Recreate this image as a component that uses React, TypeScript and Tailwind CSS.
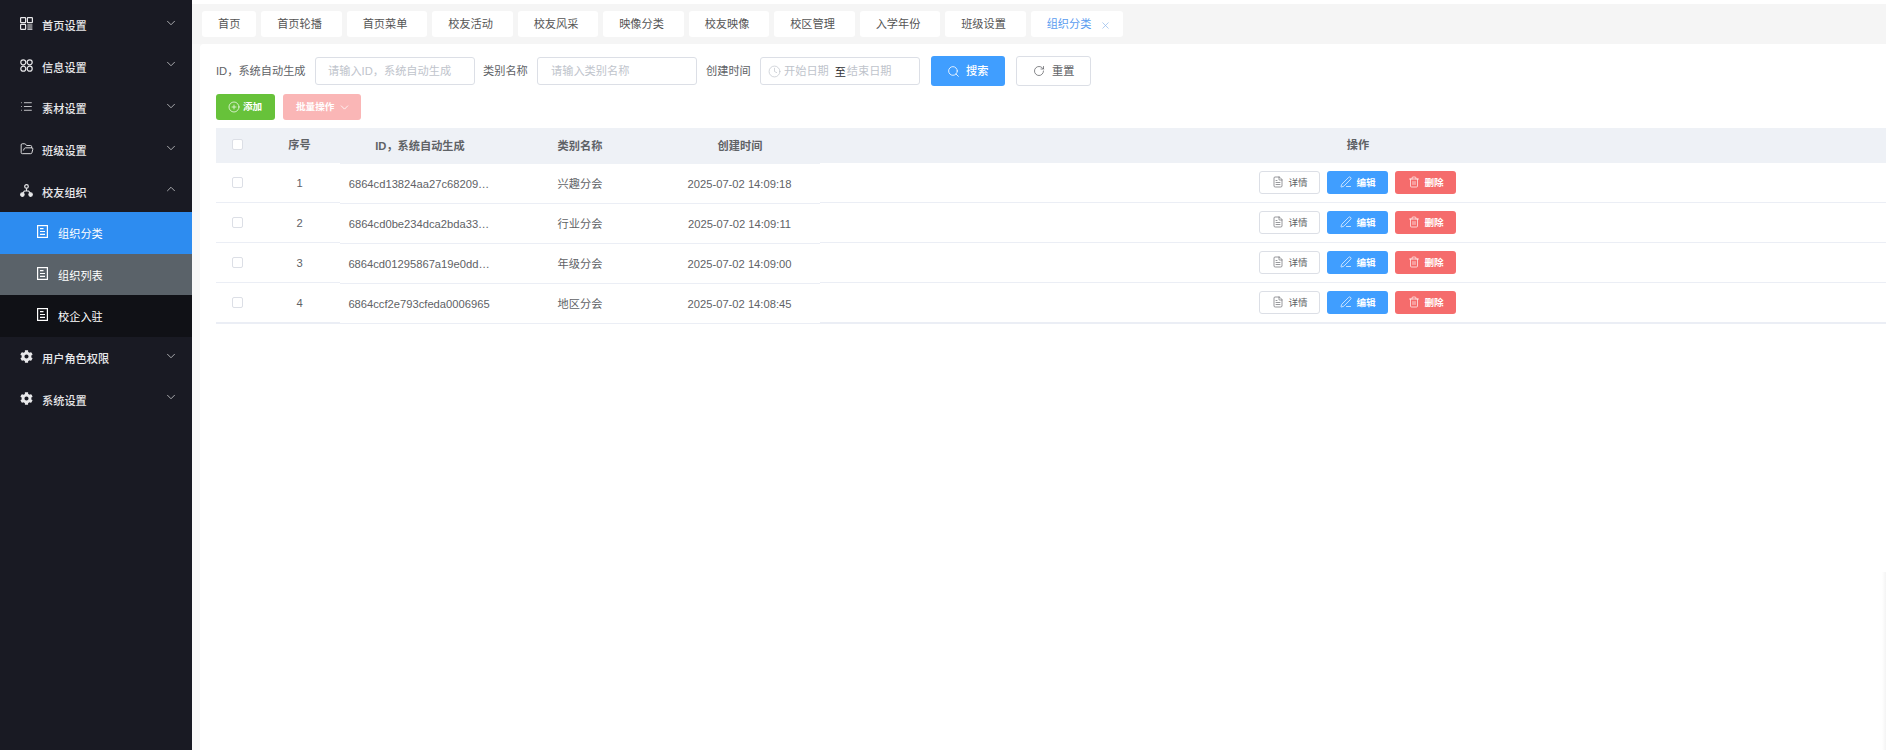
import React from 'react'
import { ChevronDown, ChevronUp, CirclePlus, Clock, FileText, FolderOpen, List, PenLine, RotateCw, Search, Trash2, X } from 'lucide-react'
import { FaCog } from 'react-icons/fa'

function HomeIcon() {
	return (
		<svg width="13" height="13" viewBox="0 0 13 13" fill="none" stroke="currentColor" strokeWidth="1.2">
			<rect x="0.6" y="0.6" width="5" height="5" rx="0.6" />
			<rect x="0.6" y="7.4" width="5" height="5" rx="0.6" />
			<rect x="7.4" y="0.6" width="5" height="5" rx="0.6" />
			<path d="M7.4 8h5M7.4 10h5M7.4 12.2h5" />
		</svg>
	)
}

function InfoIcon() {
	return (
		<svg width="13" height="13" viewBox="0 0 13 13" fill="none" stroke="currentColor" strokeWidth="1.2">
			<circle cx="3.3" cy="3.3" r="2.5" />
			<circle cx="9.7" cy="3.3" r="2.5" />
			<circle cx="3.3" cy="9.7" r="2.5" />
			<circle cx="9.7" cy="9.7" r="2.5" />
		</svg>
	)
}

function OrgIcon() {
	return (
		<svg width="13" height="13" viewBox="0 0 13 13" fill="none" stroke="currentColor" strokeWidth="1.2">
			<circle cx="6.5" cy="2.4" r="1.8" />
			<circle cx="2.4" cy="10.6" r="1.7" fill="currentColor" />
			<circle cx="10.6" cy="10.6" r="1.7" fill="currentColor" />
			<path d="M6.5 4.2v2.8M2.8 9.2l1.6-2.2h4.2l1.6 2.2" />
		</svg>
	)
}

function DocIcon() {
	return (
		<svg width="11" height="13" viewBox="0 0 11 13" fill="none" stroke="currentColor" strokeWidth="1.2">
			<rect x="0.6" y="0.6" width="9.8" height="11.8" />
			<path d="M3 3.6h3.5M3 6.5h5M3 9.4h5" />
		</svg>
	)
}

const topMenus = [
	{ label: '首页设置', icon: <HomeIcon /> },
	{ label: '信息设置', icon: <InfoIcon /> },
	{ label: '素材设置', icon: <List size={13} strokeWidth={1.5} /> },
	{ label: '班级设置', icon: <FolderOpen size={14} strokeWidth={1.6} /> }
]

const rows = [
	{ no: 1, id: '6864cd13824aa27c68209…', name: '兴趣分会', time: '2025-07-02 14:09:18' },
	{ no: 2, id: '6864cd0be234dca2bda33…', name: '行业分会', time: '2025-07-02 14:09:11' },
	{ no: 3, id: '6864cd01295867a19e0dd…', name: '年级分会', time: '2025-07-02 14:09:00' },
	{ no: 4, id: '6864ccf2e793cfeda0006965', name: '地区分会', time: '2025-07-02 14:08:45' }
]

const tabs = ['首页轮播', '首页菜单', '校友活动', '校友风采', '映像分类', '校友映像', '校区管理', '入学年份', '班级设置']

function MenuItem({ label, icon, open }: { label: string; icon: React.ReactNode; open?: boolean }) {
	return (
		<div className="flex h-[41.6px] items-center pl-5 pr-[14px] text-[#e8e8ea]">
			<span className="flex w-[22px] -translate-y-[1px]">{icon}</span>
			<span className="flex-1 pt-[4px] font-medium">{label}</span>
			{open ? (
				<ChevronUp size={14} strokeWidth={1.4} className="-translate-y-[2px] text-[#c8c9cc]" />
			) : (
				<ChevronDown size={14} strokeWidth={1.4} className="-translate-y-[2px] text-[#c8c9cc]" />
			)}
		</div>
	)
}

function SubItem({ label, className }: { label: string; className: string }) {
	return (
		<div className={`flex h-[41.6px] items-center pl-[37px] text-white ${className}`}>
			<span className="flex w-[21px] -translate-y-[1px]">
				<DocIcon />
			</span>
			<span className="pt-[4px]">{label}</span>
		</div>
	)
}

function Sidebar() {
	return (
		<div className="w-[192px] shrink-0 bg-[#191a23] pt-1">
			{topMenus.map((m) => (
				<MenuItem key={m.label} label={m.label} icon={m.icon} />
			))}
			<MenuItem label="校友组织" icon={<OrgIcon />} open />
			<SubItem label="组织分类" className="bg-[#2d8cf0]" />
			<SubItem label="组织列表" className="bg-[#5a6269]" />
			<SubItem label="校企入驻" className="bg-[#101116]" />
			<MenuItem label="用户角色权限" icon={<FaCog size={13} />} />
			<MenuItem label="系统设置" icon={<FaCog size={13} />} />
		</div>
	)
}

function TabBar() {
	return (
		<div className="mt-1 flex h-10 items-center gap-[4.75px] bg-[#f5f5f5] pl-[10px]">
			<div className="flex h-[26px] w-[54.4px] items-center rounded-[3px] bg-white pl-4 pt-[2px] text-[#555]">首页</div>
			{tabs.map((t) => (
				<div key={t} className="flex h-[26px] w-[80.75px] items-center rounded-[3px] bg-white pl-4 pt-[2px] text-[#555]">
					{t}
				</div>
			))}
			<div className="flex h-[26px] w-[92px] items-center rounded-[3px] bg-white pl-4 pt-[2px] text-[#5a9cf0]">
				组织分类
				<X size={11} strokeWidth={1.5} className="ml-[9px] text-[#8fb8ea]" />
			</div>
		</div>
	)
}

function TextInput({ placeholder, pad }: { placeholder: string; pad: string }) {
	return (
		<div className={`flex h-[28px] w-[160px] items-center rounded-[3px] border border-[#dcdfe6] pt-[2px] text-[#c0c4cc] ${pad}`}>
			{placeholder}
		</div>
	)
}

function FilterBar() {
	return (
		<div className="flex h-[30px] items-center text-[#606266]">
			<span className="w-[99px] pt-[2px]">ID，系统自动生成</span>
			<TextInput placeholder="请输入ID，系统自动生成" pad="pl-[12px]" />
			<span className="ml-[8px] w-[54px] pt-[2px]">类别名称</span>
			<TextInput placeholder="请输入类别名称" pad="pl-[13px]" />
			<span className="ml-[9px] w-[54px] pt-[2px]">创建时间</span>
			<div className="flex h-[28px] w-[160px] items-center rounded-[3px] border border-[#dcdfe6] pl-[7px] text-[#c0c4cc]">
				<Clock size={13} strokeWidth={1.3} />
				<span className="ml-[3px] pt-[2px]">开始日期</span>
				<span className="ml-[6px] w-[12px] pt-[3px] text-[#303133]">至</span>
				<span className="pt-[2px]">结束日期</span>
			</div>
			<button className="ml-[11px] flex h-[30px] w-[74px] items-center rounded-[3px] bg-[#409eff] pl-[16px] font-medium text-white">
				<Search size={13} strokeWidth={1.5} />
				<span className="ml-[6px] pt-[2px]">搜索</span>
			</button>
			<button className="ml-[11px] flex h-[30px] w-[75px] items-center rounded-[3px] border border-[#dcdfe6] pl-[16px]">
				<RotateCw size={12} strokeWidth={1.5} />
				<span className="ml-[7px] pt-[2px]">重置</span>
			</button>
		</div>
	)
}

function ActionBar() {
	return (
		<div className="mt-2 flex h-[26px] gap-2 text-[9.6px] font-bold text-white">
			<button className="flex w-[59px] items-center rounded-[3px] bg-[#67c23a] pl-[12px]">
				<CirclePlus size={12} strokeWidth={1.4} />
				<span className="ml-[3px]">添加</span>
			</button>
			<button className="flex w-[78px] items-center rounded-[3px] bg-[#fab6b6] pl-[13px]">
				<span>批量操作</span>
				<ChevronDown size={13} strokeWidth={1.5} className="ml-[4px]" />
			</button>
		</div>
	)
}

function Checkbox({ className }: { className: string }) {
	return <span className={`block rounded-[2px] border border-[#dcdfe6] bg-white ${className}`} />
}

function HeadCell({ className, children }: { className?: string; children?: React.ReactNode }) {
	return <div className={`flex items-center justify-center pt-[1px] font-bold text-[#5f6266] ${className ?? ''}`}>{children}</div>
}

function FixedLeft() {
	return (
		<div className="w-[124px] shrink-0">
			<div className="flex h-[34.6px] bg-[#eef1f6]">
				<HeadCell className="w-[43px]">
					<Checkbox className="size-[11px] -translate-y-[1px]" />
				</HeadCell>
				<HeadCell className="w-[81px]">序号</HeadCell>
			</div>
			{rows.map((r) => (
				<div key={r.no} className="flex h-[40px] items-center border-b-[0.8px] border-[#ebeef5]">
					<div className="flex w-[43px] justify-center pt-[1px]">
						<Checkbox className="size-[11px]" />
					</div>
					<div className="w-[81px] pt-[3px] text-center">{r.no}</div>
				</div>
			))}
			<div className="h-[1.2px] bg-[#ebeef5]" />
		</div>
	)
}

function MiddleColumns() {
	return (
		<div className="w-[480px] shrink-0">
			<div className="flex h-[35.6px] bg-[#eef1f6]">
				<HeadCell className="w-[160px]">ID，系统自动生成</HeadCell>
				<HeadCell className="w-[160px]">类别名称</HeadCell>
				<HeadCell className="w-[160px]">创建时间</HeadCell>
			</div>
			{rows.map((r) => (
				<div key={r.no} className="flex h-[40px] items-center border-b-[0.8px] border-[#ebeef5]">
					<div className="w-[160px] pr-[2px] pt-[3px] text-center">{r.id}</div>
					<div className="w-[160px] pt-[3px] text-center">{r.name}</div>
					<div className="w-[160px] pr-[1px] pt-[3px] text-center">{r.time}</div>
				</div>
			))}
		</div>
	)
}

function RowActions() {
	return (
		<div className="flex gap-[7px] text-[9.6px]">
			<button className="flex h-[23px] w-[61px] items-center rounded-[3px] border border-[#dcdfe6] pl-[12px]">
				<FileText size={12} strokeWidth={1.3} />
				<span className="ml-[5px] pt-[1px]">详情</span>
			</button>
			<button className="flex h-[23px] w-[61px] items-center rounded-[3px] bg-[#409eff] pl-[13px] font-bold text-white">
				<PenLine size={12} strokeWidth={1.4} />
				<span className="ml-[5px] pt-[1px]">编辑</span>
			</button>
			<button className="flex h-[23px] w-[61px] items-center rounded-[3px] bg-[#f56c6c] pl-[13px] font-bold text-white">
				<Trash2 size={12} strokeWidth={1.4} />
				<span className="ml-[5px] pt-[1px]">删除</span>
			</button>
		</div>
	)
}

function FixedRight() {
	return (
		<div className="w-[1076px] shrink-0">
			<div className="flex h-[34.6px] bg-[#eef1f6]">
				<HeadCell className="w-full">操作</HeadCell>
			</div>
			{rows.map((r) => (
				<div key={r.no} className="flex h-[40px] items-center justify-center border-b-[0.8px] border-[#ebeef5] pr-[2px]">
					<RowActions />
				</div>
			))}
			<div className="h-[1.2px] bg-[#ebeef5]" />
		</div>
	)
}

export default function App() {
	return (
		<div className="relative flex h-screen overflow-hidden bg-white font-['Liberation_Sans','Noto_Sans_CJK_SC',sans-serif] text-[11.2px] leading-none text-[#606266]">
			<Sidebar />
			<div className="flex min-w-0 flex-1 flex-col">
				<TabBar />
				<div className="flex min-h-0 flex-1 bg-[#f8f8f8] pl-2">
					<div className="min-w-0 flex-1 rounded-tl-[4px] bg-white pl-4 pt-3">
						<FilterBar />
						<ActionBar />
						<div className="mt-2 flex">
							<FixedLeft />
							<MiddleColumns />
							<FixedRight />
						</div>
					</div>
				</div>
			</div>
			<div className="absolute bottom-0 right-0 top-[572px] w-[4px] bg-gradient-to-r from-transparent to-[#f4f4f4]" />
		</div>
	)
}
